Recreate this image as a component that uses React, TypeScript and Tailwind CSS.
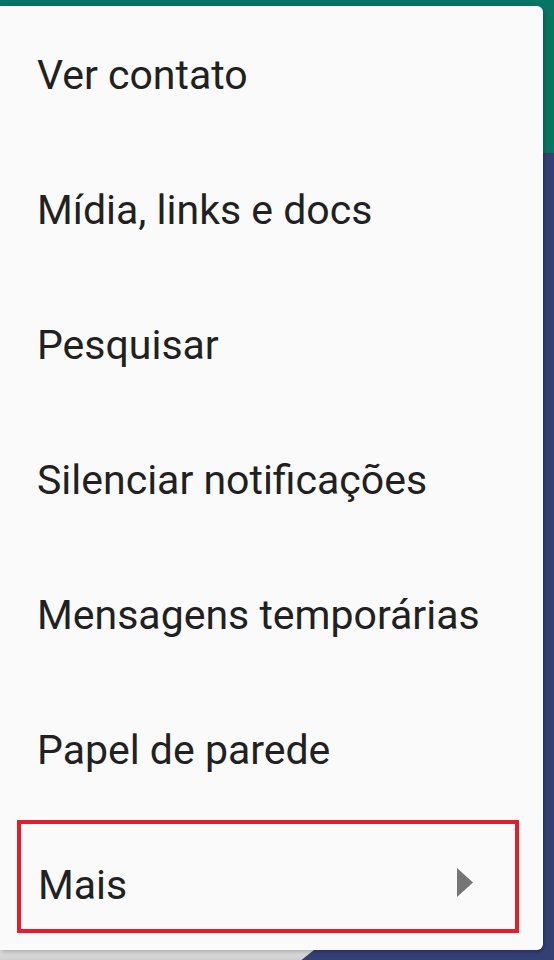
const items = [
  'Ver contato',
  'Mídia, links e docs',
  'Pesquisar',
  'Silenciar notificações',
  'Mensagens temporárias',
  'Papel de parede',
];

export default function App() {
  return (
    <div
      className="relative w-[554px] h-[960px] overflow-hidden flex flex-col bg-[#343f74]"
      style={{ fontFamily: 'Roboto, "Noto Sans", sans-serif' }}
    >
      <div className="h-[153px] bg-[#077563]" />
      <div className="flex-1" />
      <div className="h-[10px] flex">
        <div className="w-[314px] bg-gradient-to-b from-[#e4e4e4] to-[#cfcfcf] [clip-path:polygon(0_0,100%_0,96%_100%,0_100%)]" />
      </div>

      {/* popup menu */}
      <div className="absolute left-0 top-[6px] w-[543px] h-[944px] bg-[#fafafa] rounded-r-[6px] shadow-[1px_2px_4px_rgba(0,0,0,0.25)] flex flex-col">
        {items.map((label) => (
          <div key={label} className="h-[135px] flex items-center pl-[37px] pt-[4px] text-[41px] text-[#212121]">
            {label}
          </div>
        ))}
        <div className="pt-[4px] pl-[17px] pr-[24px]">
          <div className="h-[113px] border-4 border-[#e31e2b] flex items-center justify-between pl-[17px] pr-[42px] text-[41px] text-[#212121]">
            <span className="translate-y-[9px]">Mais</span>
            <svg width="16" height="29" viewBox="0 0 16 29" className="translate-y-[6px]">
              <polygon points="0,0 16,14.5 0,29" fill="#757575" />
            </svg>
          </div>
        </div>
      </div>
    </div>
  );
}
